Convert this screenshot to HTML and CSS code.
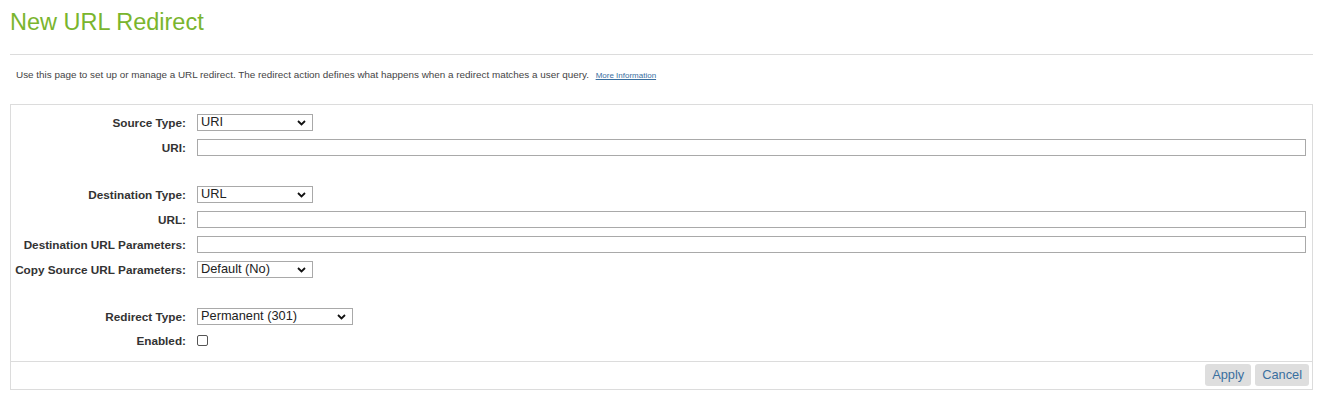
FILE: index.html
```html
<!DOCTYPE html>
<html>
<head>
<meta charset="utf-8">
<title>New URL Redirect</title>
<link rel="stylesheet" href="styles.css">
</head>
<body>
<div class="page">
  <h1 class="title">New URL Redirect</h1>
  <div class="rule"></div>
  <p class="desc">Use this page to set up or manage a URL redirect. The redirect action defines what happens when a redirect matches a user query. <a class="more" href="#">More Information</a></p>
  <div class="panel">
    <div class="form">
      <label class="lbl">Source Type:</label>
      <div class="sel w116"><span>URI</span><svg class="chev" width="9" height="6" viewBox="0 0 9 6"><path d="M1 1l3.5 3.5L8 1" fill="none" stroke="#111" stroke-width="1.8"/></svg></div>

      <label class="lbl">URI:</label>
      <div class="inp"></div>

      <div class="spacer"></div><div class="spacer"></div>

      <label class="lbl">Destination Type:</label>
      <div class="sel w116"><span>URL</span><svg class="chev" width="9" height="6" viewBox="0 0 9 6"><path d="M1 1l3.5 3.5L8 1" fill="none" stroke="#111" stroke-width="1.8"/></svg></div>

      <label class="lbl">URL:</label>
      <div class="inp"></div>

      <label class="lbl">Destination URL Parameters:</label>
      <div class="inp"></div>

      <label class="lbl">Copy Source URL Parameters:</label>
      <div class="sel w116"><span>Default (No)</span><svg class="chev" width="9" height="6" viewBox="0 0 9 6"><path d="M1 1l3.5 3.5L8 1" fill="none" stroke="#111" stroke-width="1.8"/></svg></div>

      <div class="spacer"></div><div class="spacer"></div>

      <label class="lbl">Redirect Type:</label>
      <div class="sel w156"><span>Permanent (301)</span><svg class="chev" width="9" height="6" viewBox="0 0 9 6"><path d="M1 1l3.5 3.5L8 1" fill="none" stroke="#111" stroke-width="1.8"/></svg></div>

      <label class="lbl">Enabled:</label>
      <div class="cbrow"><span class="cb"></span></div>
    </div>
    <div class="footer">
      <button class="btn">Apply</button>
      <button class="btn">Cancel</button>
    </div>
  </div>
</div>
</body>
</html>
```

FILE: styles.css
```css
html, body {
  margin: 0;
  padding: 0;
  background: #fff;
}
body {
  font-family: "Liberation Sans", Arial, sans-serif;
  color: #333;
}
.page {
  width: 1303px;
  padding-left: 10px;
}
.title {
  margin: 0;
  padding-top: 8px;
  height: 28px;
  font-size: 23.5px;
  line-height: 28px;
  font-weight: normal;
  color: #7ab52e;
}
.rule {
  margin-top: 18px;
  height: 1px;
  background: #dcdcdc;
}
.desc {
  margin: 0;
  padding: 14px 0 0 6px;
  height: 25px;
  font-size: 9.9px;
  line-height: 12px;
  color: #444;
}
.more {
  margin-left: 4px;
  font-size: 8px;
  color: #3a6f9f;
  text-decoration: underline;
}
.panel {
  margin-top: 10px;
  border: 1px solid #dcdcdc;
}
.form {
  display: grid;
  grid-template-columns: 175px 1fr;
  column-gap: 11px;
  row-gap: 8px;
  align-items: center;
  padding: 9px 6px 13px 0;
}
.lbl {
  text-align: right;
  font-size: 11.75px;
  font-weight: bold;
  color: #333;
  line-height: 14px;
}
.spacer {
  height: 14px;
}
.inp {
  height: 15px;
  border: 1px solid #a9a9a9;
  background: #fff;
}
.sel {
  position: relative;
  height: 15px;
  border: 1px solid #a9a9a9;
  background: #fff;
  font-size: 12.8px;
  line-height: 14px;
  color: #222;
  padding-left: 3px;
  box-sizing: content-box;
}
.w116 { width: 111px; }
.w156 { width: 151px; }
.chev {
  position: absolute;
  right: 6px;
  top: 5px;
}
.cbrow {
  height: 15px;
  display: flex;
  align-items: center;
}
.cb {
  display: block;
  width: 9px;
  height: 9px;
  border: 1px solid #555;
  border-radius: 2px;
  background: #fff;
}
.footer {
  border-top: 1px solid #dcdcdc;
  display: flex;
  justify-content: flex-end;
  gap: 4px;
  padding: 2px 3px 3px 0;
}
.btn {
  height: 22px;
  padding: 0 7px;
  border: none;
  border-radius: 3px;
  background: #dedede;
  color: #3a6f9f;
  font-family: "Liberation Sans", Arial, sans-serif;
  font-size: 12.8px;
  line-height: 22px;
}
```
